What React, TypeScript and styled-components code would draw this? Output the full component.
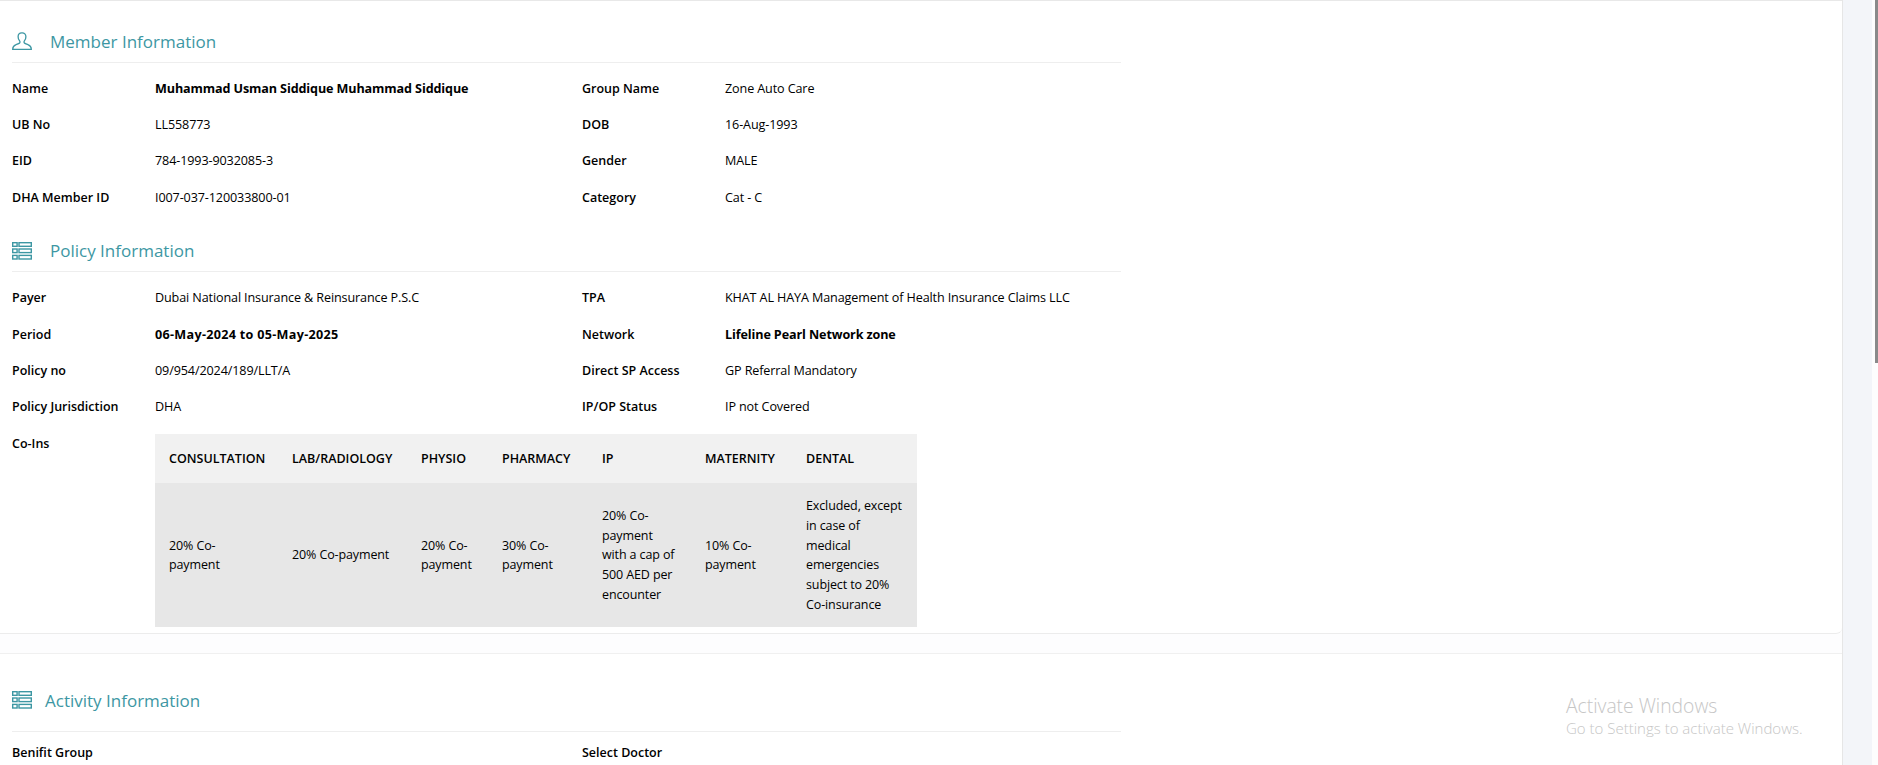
import styled, { createGlobalStyle } from "styled-components";

const GlobalStyle = createGlobalStyle`
  html, body {
    margin: 0;
    height: 765px;
    overflow: hidden;
    background: #fdfdfe;
  }
  body {
    font-family: "Open Sans", "Noto Sans", sans-serif;
    color: #000;
  }
`;

type Field = { label: string; value: string; strong?: boolean; wide?: boolean };

const memberRows: Field[][] = [
  [
    { label: "Name", value: "Muhammad Usman Siddique Muhammad Siddique", strong: true },
    { label: "Group Name", value: "Zone Auto Care" },
  ],
  [
    { label: "UB No", value: "LL558773" },
    { label: "DOB", value: "16-Aug-1993" },
  ],
  [
    { label: "EID", value: "784-1993-9032085-3" },
    { label: "Gender", value: "MALE" },
  ],
  [
    { label: "DHA Member ID", value: "I007-037-120033800-01" },
    { label: "Category", value: "Cat - C" },
  ],
];

const policyRows: Field[][] = [
  [
    { label: "Payer", value: "Dubai National Insurance & Reinsurance P.S.C" },
    { label: "TPA", value: "KHAT AL HAYA Management of Health Insurance Claims LLC" },
  ],
  [
    { label: "Period", value: "06-May-2024 to 05-May-2025", strong: true, wide: true },
    { label: "Network", value: "Lifeline Pearl Network zone", strong: true },
  ],
  [
    { label: "Policy no", value: "09/954/2024/189/LLT/A" },
    { label: "Direct SP Access", value: "GP Referral Mandatory" },
  ],
  [
    { label: "Policy Jurisdiction", value: "DHA" },
    { label: "IP/OP Status", value: "IP not Covered" },
  ],
];

const coIns = [
  { head: "CONSULTATION", width: 123, text: "20% Co-payment" },
  { head: "LAB/RADIOLOGY", width: 129, text: "20% Co-payment" },
  { head: "PHYSIO", width: 81, text: "20% Co-payment" },
  { head: "PHARMACY", width: 100, text: "30% Co-payment" },
  { head: "IP", width: 103, text: "20% Co-payment with a cap of 500 AED per encounter" },
  { head: "MATERNITY", width: 101, text: "10% Co-payment" },
  { head: "DENTAL", width: 125, text: "Excluded, except in case of medical emergencies subject to 20% Co-insurance" },
];

const UserIcon = () => (
  <svg width="20" height="18" viewBox="0 0 20 18" fill="none" stroke="#3d97a3" strokeWidth="1.3">
    <path d="M9.8.8C7.6.8 6.1 2.5 6.1 4.7c0 1.7.6 3.1 1.5 4.1.5.6.5 1.6 0 2.2-.6.7-2.3 1.2-3.9 1.8C1.7 13.5.7 14.8.7 17.3h18.6c0-2.5-1-3.8-3-4.5-1.6-.6-3.3-1.1-3.9-1.8-.5-.6-.5-1.6 0-2.2.9-1 1.5-2.4 1.5-4.1 0-2.2-1.5-3.9-3.7-3.9z" />
  </svg>
);

const ListIcon = () => (
  <svg width="20" height="18" viewBox="0 0 20 18" fill="none" stroke="#3d97a3" strokeWidth="1.4">
    <rect x=".7" y=".7" width="4.4" height="3.6" />
    <rect x="7" y=".7" width="12.3" height="3.6" />
    <rect x=".7" y="7" width="4.4" height="3.6" />
    <rect x="7" y="7" width="12.3" height="3.6" />
    <rect x=".7" y="13.4" width="4.4" height="3.6" />
    <rect x="7" y="13.4" width="12.3" height="3.6" />
  </svg>
);

const FieldRows = ({ rows }: { rows: Field[][] }) => (
  <>
    {rows.map((row) => (
      <Row key={row[0].label}>
        {row.map((f) => (
          <Pair key={f.label}>
            <Label>{f.label}</Label>
            <Value $strong={f.strong} $wide={f.wide}>
              {f.value}
            </Value>
          </Pair>
        ))}
      </Row>
    ))}
  </>
);

export default function App() {
  return (
    <>
      <GlobalStyle />
      <Page>
        <Content>
          <Card>
            <Heading $gap={18} $top={29} $bottom={10}>
              <UserIcon />
              <Title>Member Information</Title>
            </Heading>
            <Fields $top={7}>
              <FieldRows rows={memberRows} />
            </Fields>
            <Heading $gap={18} $top={24} $bottom={9}>
              <ListIcon />
              <Title>Policy Information</Title>
            </Heading>
            <Fields $top={8}>
              <FieldRows rows={policyRows} />
              <CoInsRow>
                <Label>Co-Ins</Label>
                <CoInsTable>
                  <colgroup>
                    {coIns.map((c) => (
                      <col key={c.head} width={c.width} />
                    ))}
                  </colgroup>
                  <thead>
                    <tr>
                      {coIns.map((c) => (
                        <HeadCell key={c.head}>{c.head}</HeadCell>
                      ))}
                    </tr>
                  </thead>
                  <tbody>
                    <tr>
                      {coIns.map((c) => (
                        <BodyCell key={c.head}>{c.text}</BodyCell>
                      ))}
                    </tr>
                  </tbody>
                </CoInsTable>
              </CoInsRow>
            </Fields>
          </Card>
          <SecondSection>
            <Heading $gap={13} $top={35} $bottom={20}>
              <ListIcon />
              <Title>Activity Information</Title>
            </Heading>
            <Fields $top={2}>
              <Row>
                <Pair>
                  <Label>Benifit Group</Label>
                </Pair>
                <Pair>
                  <Label>Select Doctor</Label>
                </Pair>
              </Row>
            </Fields>
          </SecondSection>
          <Watermark>
            <WatermarkTitle>Activate Windows</WatermarkTitle>
            <WatermarkText>Go to Settings to activate Windows.</WatermarkText>
          </Watermark>
        </Content>
        <SideStrip />
        <Scrollbar>
          <Thumb />
        </Scrollbar>
      </Page>
    </>
  );
}

const Page = styled.div`
  display: flex;
  width: 1878px;
  height: 765px;
  overflow: hidden;
`;

const Content = styled.main`
  position: relative;
  width: 1842px;
  flex: none;
`;

const SideStrip = styled.div`
  width: 30px;
  flex: none;
  background: #f3f5f9;
  border-left: 1px solid #e6e6e6;
  box-sizing: border-box;
`;

const Scrollbar = styled.div`
  width: 6px;
  flex: none;
  display: flex;
  justify-content: flex-end;
  background: #fdfdfd;
`;

const Thumb = styled.div`
  width: 3px;
  height: 363px;
  background: #8a8a8a;
`;

const Card = styled.section`
  height: 634px;
  box-sizing: border-box;
  padding: 0 12px;
  background: #fff;
  border-top: 1px solid #e8e8e8;
  border-bottom: 1px solid #ececec;
  border-radius: 0 0 6px 0;
`;

const SecondSection = styled.section`
  margin-top: 19px;
  height: 112px;
  padding: 0 12px;
  background: #fff;
  border-top: 1px solid #f0f0f0;
`;

const Heading = styled.div<{ $gap: number; $top: number; $bottom: number }>`
  display: flex;
  align-items: center;
  gap: ${(p) => p.$gap}px;
  width: 1109px;
  height: 22px;
  padding: ${(p) => p.$top}px 0 ${(p) => p.$bottom}px;
  border-bottom: 1px solid #eeeeee;
`;

const Title = styled.h2`
  margin: 0;
  font-size: 17px;
  font-weight: 400;
  color: #3d97a3;
`;

const Fields = styled.div<{ $top: number }>`
  padding-top: ${(p) => p.$top}px;
`;

const Row = styled.div`
  display: flex;
  height: 36.4px;
  align-items: center;
`;

const Pair = styled.div`
  display: flex;
  width: 570px;
  flex: none;
  align-items: center;
`;

const Label = styled.span`
  width: 143px;
  flex: none;
  font-size: 12.5px;
  font-weight: 600;
`;

const Value = styled.span<{ $strong?: boolean; $wide?: boolean }>`
  font-size: 12.6px;
  font-weight: ${(p) => (p.$strong ? 700 : 400)};
  letter-spacing: ${(p) => (p.$wide ? "0.3px" : "-0.12px")};
`;

const CoInsRow = styled.div`
  display: flex;
  align-items: flex-start;
  padding-top: 9px;

  ${Label} {
    line-height: 20px;
  }
`;

const CoInsTable = styled.table`
  width: 762px;
  table-layout: fixed;
  border-collapse: collapse;
  font-size: 12.5px;
`;

const HeadCell = styled.th`
  height: 49px;
  padding: 0 14px;
  text-align: left;
  font-weight: 600;
  background: #f1f1f1;
`;

const BodyCell = styled.td`
  height: 144px;
  padding: 13px 14px;
  box-sizing: border-box;
  line-height: 19.7px;
  letter-spacing: -0.12px;
  background: #e7e7e7;

  &:last-child {
    padding-right: 12px;
  }
`;

const Watermark = styled.div`
  position: absolute;
  left: 1566px;
  top: 694px;
  font-weight: 300;
  color: #c6c6c6;
`;

const WatermarkTitle = styled.div`
  font-size: 19.3px;
  line-height: 24px;
`;

const WatermarkText = styled.div`
  font-size: 15px;
  line-height: 20px;
`;
